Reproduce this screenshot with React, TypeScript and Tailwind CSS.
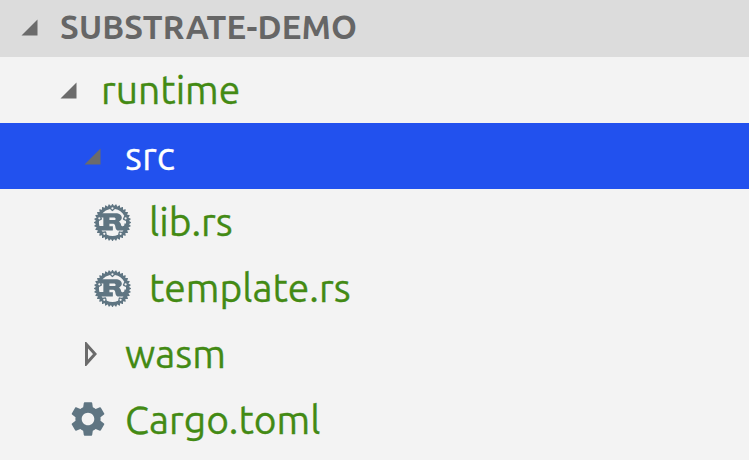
import { FaRust } from "react-icons/fa";
import { MdSettings } from "react-icons/md";

const font = "font-['Ubuntu','Noto_Sans','Open_Sans',sans-serif]";

function Down({ color = "#6b6b6b" }: { color?: string }) {
  return (
    <svg width="17" height="17" viewBox="0 0 17 17" className="shrink-0">
      <path d="M0.5 16.5 L16.5 0.5 V16.5 Z" fill={color} />
    </svg>
  );
}

function Right() {
  return (
    <svg width="12" height="24" viewBox="0 0 12 24" className="shrink-0">
      <path d="M1.5 2.5 L10 12 L1.5 21.5 Z" fill="none" stroke="#6b6b6b" strokeWidth="3" />
    </svg>
  );
}

function Row({
  pad,
  gap,
  icon,
  label,
  selected,
}: {
  pad: string;
  gap: string;
  icon: React.ReactNode;
  label: string;
  selected?: boolean;
}) {
  return (
    <div className={`flex h-[66px] items-center ${pad} ${selected ? "bg-[#2251ee]" : ""}`}>
      <div className={`flex items-center ${gap}`}>
        {icon}
        <span
          className={`pb-[1px] text-[39px] leading-none [-webkit-text-stroke:0.3px_currentColor] ${
            selected ? "text-white" : "text-[#438a14]"
          }`}
        >
          {label}
        </span>
      </div>
    </div>
  );
}

export default function App() {
  return (
    <div className={`h-[460px] w-[749px] overflow-hidden bg-[#f3f3f3] ${font}`}>
      <div className="flex h-[57px] items-center gap-[22px] bg-[#dcdcdc] pl-[21px]">
        <div className="mb-[3px]">
          <Down />
        </div>
        <span className="pb-[5px] text-[33px] font-bold leading-none tracking-[0.2px] text-[#666666]">SUBSTRATE-DEMO</span>
      </div>
      <Row pad="pl-[60px]" gap="gap-[24px]" icon={<Down />} label="runtime" />
      <Row pad="pl-[84px]" gap="gap-[24px]" icon={<Down />} label="src" selected />
      <Row pad="pl-[94px]" gap="gap-[18px]" icon={<FaRust size={37} color="#5f7582" />} label="lib.rs" />
      <Row pad="pl-[94px]" gap="gap-[18px]" icon={<FaRust size={37} color="#5f7582" />} label="template.rs" />
      <Row pad="pl-[85px]" gap="gap-[28px]" icon={<Right />} label="wasm" />
      <Row
        pad="pl-[67px]"
        gap="gap-[16px]"
        icon={<MdSettings size={42} color="#5f7582" className="mb-[3px]" />}
        label="Cargo.toml"
      />
    </div>
  );
}
